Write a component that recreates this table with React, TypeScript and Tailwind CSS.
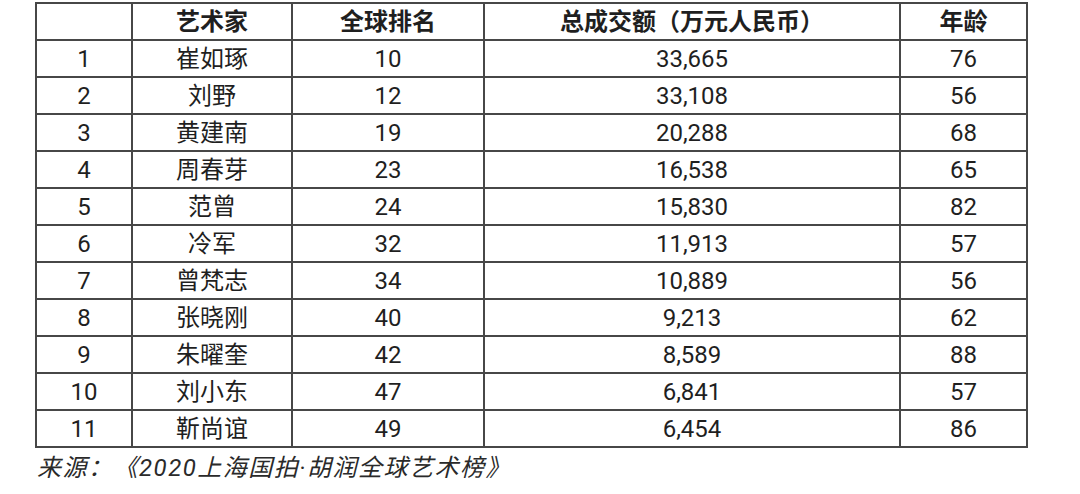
const rows = [
  ['1', '崔如琢', '10', '33,665', '76'],
  ['2', '刘野', '12', '33,108', '56'],
  ['3', '黄建南', '19', '20,288', '68'],
  ['4', '周春芽', '23', '16,538', '65'],
  ['5', '范曾', '24', '15,830', '82'],
  ['6', '冷军', '32', '11,913', '57'],
  ['7', '曾梵志', '34', '10,889', '56'],
  ['8', '张晓刚', '40', '9,213', '62'],
  ['9', '朱曜奎', '42', '8,589', '88'],
  ['10', '刘小东', '47', '6,841', '57'],
  ['11', '靳尚谊', '49', '6,454', '86'],
];

const headers = ['', '艺术家', '全球排名', '总成交额（万元人民币）', '年龄'];

export default function App() {
  return (
    <div
      className="w-[1080px] h-[494px] bg-white text-[#1f1f1f] overflow-hidden"
      style={{ fontFamily: 'Roboto, "Noto Sans CJK SC", sans-serif' }}
    >
      <div className="pt-[2px] pl-[35px]">
        <table className="table-fixed border-collapse w-[991px] text-[24px] leading-none">
          <colgroup>
            <col className="w-[96px]" />
            <col className="w-[160px]" />
            <col className="w-[192px]" />
            <col className="w-[416px]" />
            <col className="w-[127px]" />
          </colgroup>
          <thead>
            <tr className="h-[37px]">
              {headers.map((h, i) => (
                <th key={i} className="border-2 border-[#474747] font-bold text-center p-0">
                  {h}
                </th>
              ))}
            </tr>
          </thead>
          <tbody>
            {rows.map(r => (
              <tr key={r[0]} className="h-[37px]">
                {r.map((c, i) => (
                  <td key={i} className="border-2 border-[#474747] text-center p-0">
                    {c}
                  </td>
                ))}
              </tr>
            ))}
          </tbody>
        </table>
        <div className="mt-[8px] pl-[2px] text-[24px] italic leading-none tracking-[1.5px] text-[#2a2a2a]">
          来源：《2020上海国拍·胡润全球艺术榜》
        </div>
      </div>
    </div>
  );
}
